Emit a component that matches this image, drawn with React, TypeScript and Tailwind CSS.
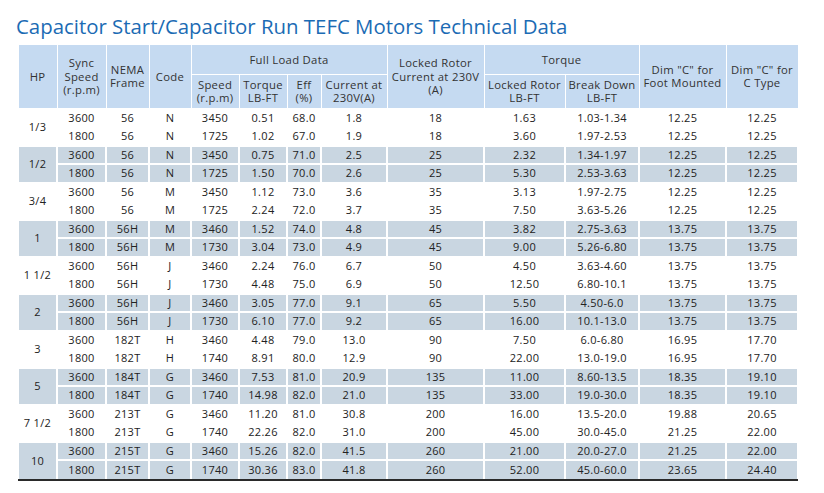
import React from "react";

type Row = [string, string, string, string, string, string, string, string, string, string, string, string];

const groups: { hp: string; rows: Row[] }[] = [
    {hp: "1/3", rows: [
        ["3600", "56", "N", "3450", "0.51", "68.0", "1.8", "18", "1.63", "1.03-1.34", "12.25", "12.25"],
        ["1800", "56", "N", "1725", "1.02", "67.0", "1.9", "18", "3.60", "1.97-2.53", "12.25", "12.25"],
    ]},
    {hp: "1/2", rows: [
        ["3600", "56", "N", "3450", "0.75", "71.0", "2.5", "25", "2.32", "1.34-1.97", "12.25", "12.25"],
        ["1800", "56", "N", "1725", "1.50", "70.0", "2.6", "25", "5.30", "2.53-3.63", "12.25", "12.25"],
    ]},
    {hp: "3/4", rows: [
        ["3600", "56", "M", "3450", "1.12", "73.0", "3.6", "35", "3.13", "1.97-2.75", "12.25", "12.25"],
        ["1800", "56", "M", "1725", "2.24", "72.0", "3.7", "35", "7.50", "3.63-5.26", "12.25", "12.25"],
    ]},
    {hp: "1", rows: [
        ["3600", "56H", "M", "3460", "1.52", "74.0", "4.8", "45", "3.82", "2.75-3.63", "13.75", "13.75"],
        ["1800", "56H", "M", "1730", "3.04", "73.0", "4.9", "45", "9.00", "5.26-6.80", "13.75", "13.75"],
    ]},
    {hp: "1 1/2", rows: [
        ["3600", "56H", "J", "3460", "2.24", "76.0", "6.7", "50", "4.50", "3.63-4.60", "13.75", "13.75"],
        ["1800", "56H", "J", "1730", "4.48", "75.0", "6.9", "50", "12.50", "6.80-10.1", "13.75", "13.75"],
    ]},
    {hp: "2", rows: [
        ["3600", "56H", "J", "3460", "3.05", "77.0", "9.1", "65", "5.50", "4.50-6.0", "13.75", "13.75"],
        ["1800", "56H", "J", "1730", "6.10", "77.0", "9.2", "65", "16.00", "10.1-13.0", "13.75", "13.75"],
    ]},
    {hp: "3", rows: [
        ["3600", "182T", "H", "3460", "4.48", "79.0", "13.0", "90", "7.50", "6.0-6.80", "16.95", "17.70"],
        ["1800", "182T", "H", "1740", "8.91", "80.0", "12.9", "90", "22.00", "13.0-19.0", "16.95", "17.70"],
    ]},
    {hp: "5", rows: [
        ["3600", "184T", "G", "3460", "7.53", "81.0", "20.9", "135", "11.00", "8.60-13.5", "18.35", "19.10"],
        ["1800", "184T", "G", "1740", "14.98", "82.0", "21.0", "135", "33.00", "19.0-30.0", "18.35", "19.10"],
    ]},
    {hp: "7 1/2", rows: [
        ["3600", "213T", "G", "3460", "11.20", "81.0", "30.8", "200", "16.00", "13.5-20.0", "19.88", "20.65"],
        ["1800", "213T", "G", "1740", "22.26", "82.0", "31.0", "200", "45.00", "30.0-45.0", "21.25", "22.00"],
    ]},
    {hp: "10", rows: [
        ["3600", "215T", "G", "3460", "15.26", "82.0", "41.5", "260", "21.00", "20.0-27.0", "21.25", "22.00"],
        ["1800", "215T", "G", "1740", "30.36", "83.0", "41.8", "260", "52.00", "45.0-60.0", "23.65", "24.40"],
    ]},
];

const widths = [39, 49, 43, 42, 48, 48, 34, 66, 97, 81, 74, 87, 72];

const th = "border border-white font-normal leading-[13.5px] px-0 text-center align-middle whitespace-nowrap";
const cell = "text-center align-middle leading-[14px] p-0 border-white";

export default function App() {
    const last = groups.length - 1;
    return (
        <div className="w-[824px] h-[493px] bg-white font-['Open_Sans','Noto_Sans',sans-serif] text-[#222]">
            <h1 className="pl-[16px] pt-[13px] h-[44px] text-[20.4px] leading-[26px] text-[#1b6bb4]">
                Capacitor Start/Capacitor Run TEFC Motors Technical Data
            </h1>
            <table className="ml-[17px] w-[780px] table-fixed border-collapse text-[11px] tracking-[0.3px]">
                <colgroup>
                    {widths.map((w, i) => <col key={i} style={{width: w}}/>)}
                </colgroup>
                <thead className="bg-[#c5daf1] text-[#333] text-[11.3px]">
                    <tr className="h-[30px]">
                        <th rowSpan={2} className={th}>HP</th>
                        <th rowSpan={2} className={th}>Sync<br/>Speed<br/>(r.p.m)</th>
                        <th rowSpan={2} className={th}>NEMA<br/>Frame</th>
                        <th rowSpan={2} className={th}>Code</th>
                        <th colSpan={4} className={th}>Full Load Data</th>
                        <th rowSpan={2} className={th}>Locked Rotor<br/>Current at 230V<br/>(A)</th>
                        <th colSpan={2} className={th}>Torque</th>
                        <th rowSpan={2} className={th}>Dim "C" for<br/>Foot Mounted</th>
                        <th rowSpan={2} className={th}>Dim "C" for<br/>C Type</th>
                    </tr>
                    <tr className="h-[34px]">
                        <th className={th}>Speed<br/>(r.p.m)</th>
                        <th className={th}>Torque<br/>LB-FT</th>
                        <th className={th}>Eff<br/>(%)</th>
                        <th className={th}>Current at<br/>230V(A)</th>
                        <th className={th}>Locked Rotor<br/>LB-FT</th>
                        <th className={th}>Break Down<br/>LB-FT</th>
                    </tr>
                </thead>
                <tbody>
                    {groups.map((g, gi) => {
                        const bg = gi % 2 === 1 ? "bg-[#c9d6e1]" : "bg-white";
                        return g.rows.map((r, ri) => {
                            const edge = gi === last && ri === 1;
                            const b = edge ? "border-x-2 border-t-2" : "border-2";
                            return (
                                <tr key={`${gi}-${ri}`} className={`${ri === 0 ? "h-[18px]" : "h-[19px]"} ${bg}`}>
                                    {ri === 0 && (
                                        <td rowSpan={2} className={`${cell} ${gi === last ? "border-x-2 border-t-2" : "border-2"}`}>
                                            {g.hp}
                                        </td>
                                    )}
                                    {r.map((c, ci) => (
                                        <td key={ci} className={`${cell} ${b}`}>
                                            {c}
                                        </td>
                                    ))}
                                </tr>
                            );
                        });
                    })}
                </tbody>
                <tfoot>
                    <tr className="h-[2px]">
                        <td colSpan={13} className="p-0 h-[2px] bg-[#2a2a2a]"/>
                    </tr>
                </tfoot>
            </table>
        </div>
    );
}
